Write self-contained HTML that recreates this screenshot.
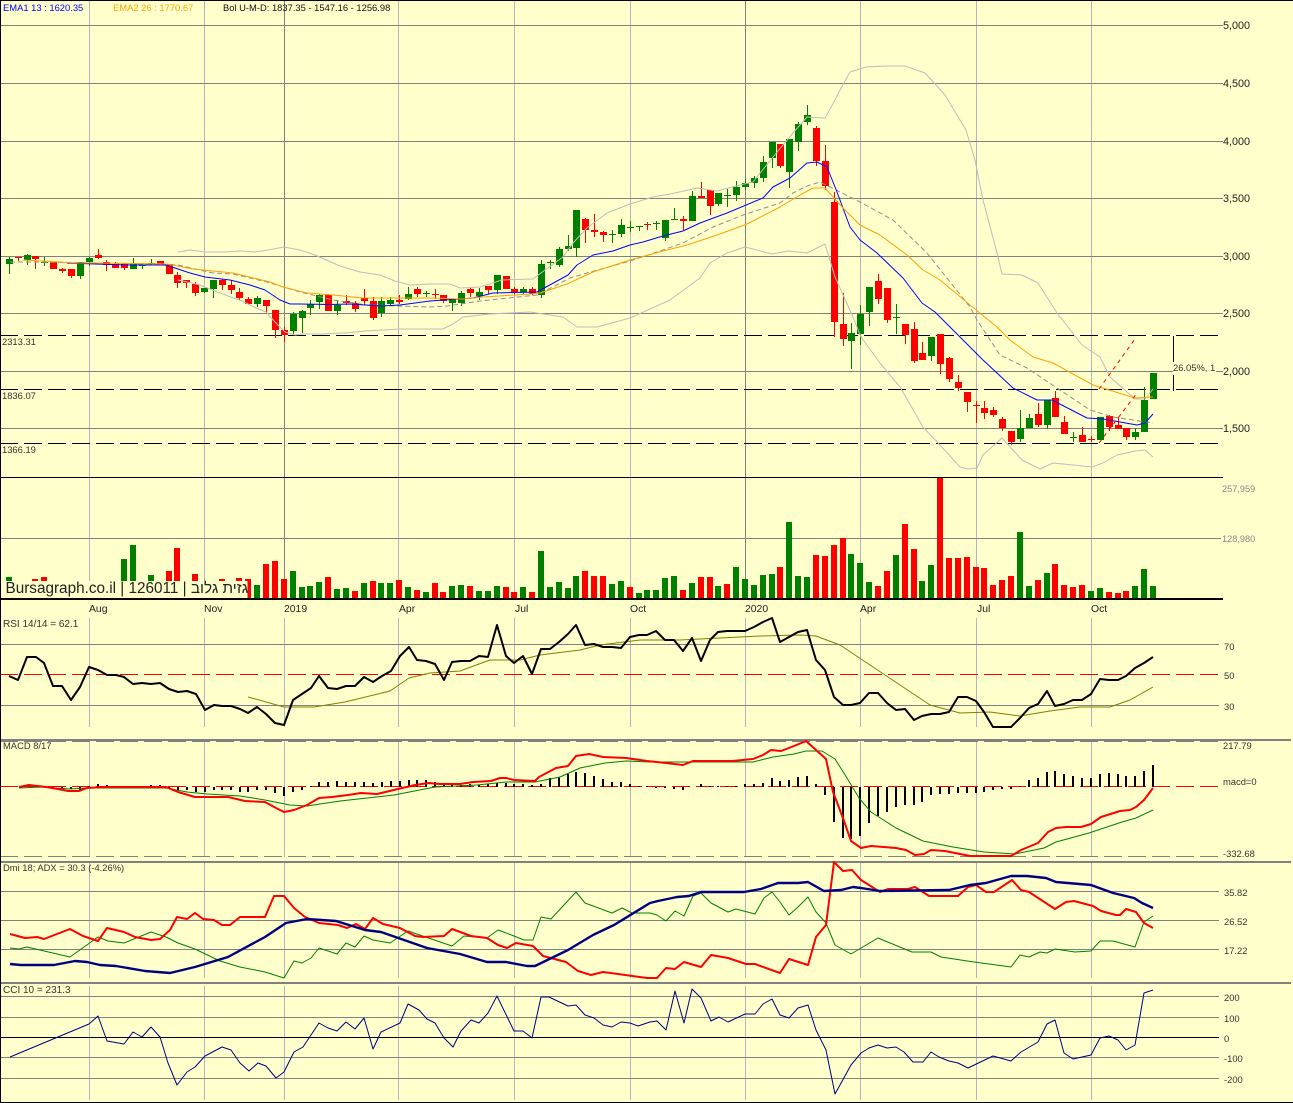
<!DOCTYPE html>
<html><head><meta charset="utf-8"><title>Bursagraph</title>
<style>
html,body{margin:0;padding:0;background:#ffffcc;width:1293px;height:1103px;overflow:hidden}
svg{position:absolute;left:0;top:0;display:block}
text{font-family:"Liberation Sans",sans-serif;font-size:9.4px;fill:#333}
.ax{font-size:10.8px;fill:#222}
.mo{font-size:10.4px;fill:#222}
.c{shape-rendering:crispEdges;fill:none}
.l{fill:none;stroke-linejoin:round}
#lab{position:absolute;left:5.5px;top:579px;height:19px;line-height:19px;font-family:"Liberation Sans",sans-serif;font-size:15.3px;color:#222;white-space:nowrap}
</style></head><body>
<svg width="1293" height="1103" viewBox="0 0 1293 1103">
<rect width="1293" height="1103" fill="#ffffcc"/>
<!-- vertical grid -->
<path class="c" stroke="#b4b4c4" d="M89.5 0V598M204.5 0V598M398.5 0V598M514.5 0V598M630.5 0V598M860.5 0V598M976.5 0V598M1091.5 0V598"/>
<path class="c" stroke="#808080" d="M284.5 0V598M745.5 0V598"/>
<path class="c" stroke="#b4b4c4" d="M89.5 618V727M204.5 618V727M284.5 618V727M398.5 618V727M514.5 618V727M630.5 618V727M745.5 618V727M860.5 618V727M976.5 618V727M1091.5 618V727M89.5 741V857M204.5 741V857M284.5 741V857M398.5 741V857M514.5 741V857M630.5 741V857M745.5 741V857M860.5 741V857M976.5 741V857M1091.5 741V857M89.5 863V978M204.5 863V978M284.5 863V978M398.5 863V978M514.5 863V978M630.5 863V978M745.5 863V978M860.5 863V978M976.5 863V978M1091.5 863V978M89.5 986V1100M204.5 986V1100M284.5 986V1100M398.5 986V1100M514.5 986V1100M630.5 986V1100M745.5 986V1100M860.5 986V1100M976.5 986V1100M1091.5 986V1100"/>
<!-- horizontal grid -->
<path class="c" stroke="#808080" d="M1 25.5H1223M1 83.5H1223M1 141.5H1223M1 198.5H1223M1 256.5H1223M1 313.5H1223M1 371.5H1223M1 428.5H1223M1 538.5H1221M1 644.5H1219M1 705.5H1219M1 891.5H1219M1 920.5H1219M1 949.5H1219M1 996.5H1219M1 1017.5H1219M1 1057.5H1219M1 1078.5H1219"/>
<path class="c" stroke="#000" d="M1 477.5H1223M1 1037.5H1219"/>
<path class="c" stroke="#000" stroke-width="2" d="M1 599H1223"/>
<!-- dashed levels -->
<path class="c" stroke="#000" stroke-dasharray="18 6" d="M0 335.5H1218M0 389.5H1218M0 443.5H1218"/>
<path class="c" stroke="#f00" stroke-dasharray="18 6" d="M0 674.5H1218M0 786.5H1218"/>
<path class="c" stroke="#808080" stroke-dasharray="18 6" d="M0 856.5H1218M0 741.5H1218"/>
<!-- separators -->
<path class="c" stroke="#808080" stroke-width="2" d="M0 740H1291M0 862H1291M0 983H1291"/>
<!-- volume -->
<path class="c" stroke="#f00" stroke-width="6" d="M35 598V579M44 598V577M169 598V571M177 598V548M195 598V574M222 598V579M239 598V578M248 598V579M266 598V564M275 598V561M284 598V579M328 598V577M355 598V591M373 598V581M399 598V580M417 598V590M435 598V583M443 598V592M470 598V586M506 598V587M514 598V592M532 598V592M585 598V571M594 598V576M603 598V576M630 598V587M683 598V590M701 598V577M710 598V577M727 598V584M780 598V567M816 598V555M825 598V556M834 598V545M843 598V538M878 598V586M887 598V571M905 598V524M914 598V549M940 598V478M949 598V558M958 598V558M967 598V557M976 598V567M984 598V568M993 598V585M1002 598V580M1011 598V576M1038 598V580M1055 598V564M1064 598V585M1073 598V587M1082 598V585M1109 598V592M1118 598V593M1126 598V591"/>
<path class="c" stroke="#008000" stroke-width="6" d="M9 598V577M124 598V559M133 598V545M151 598V575M257 598V585M293 598V571M302 598V587M310 598V586M319 598V582M337 598V589M346 598V588M364 598V583M381 598V583M390 598V583M408 598V587M426 598V592M452 598V586M461 598V585M479 598V591M488 598V591M497 598V586M523 598V587M541 598V551M550 598V587M559 598V582M568 598V588M576 598V576M612 598V584M621 598V581M639 598V593M647 598V590M656 598V590M665 598V578M674 598V576M692 598V583M718 598V586M736 598V567M745 598V579M754 598V585M763 598V575M772 598V574M789 598V522M798 598V576M807 598V577M851 598V554M860 598V563M869 598V582M896 598V555M922 598V581M931 598V565M1020 598V532M1029 598V586M1047 598V573M1091 598V591M1100 598V588M1135 598V586M1144 598V569M1153 598V586"/>
<rect x="1" y="581" width="246.5" height="17" fill="#ffffcc"/>
<!-- candle wicks -->
<path class="c" stroke="#008000" d="M9.5 257V274M27.5 254V265M44.5 257V266M80.5 262V279M89.5 257V266M133.5 258V269M142.5 263V269M151.5 259V265M204.5 288V293M213.5 280V298M257.5 296V307M293.5 312V334M302.5 310V333M310.5 300V315M319.5 294V309M337.5 300V315M381.5 297V317M390.5 297V305M408.5 287V300M426.5 291V297M452.5 299V311M461.5 291V306M479.5 288V300M497.5 275V294M523.5 287V294M541.5 260V298M550.5 260V269M559.5 247V267M568.5 235V251M576.5 210V257M612.5 230V243M621.5 219V237M630.5 221V232M639.5 226V231M656.5 221V230M665.5 220V241M674.5 208V220M692.5 191V221M718.5 193V206M727.5 189V207M736.5 181V201M745.5 179V190M754.5 176V188M763.5 156V182M772.5 142V168M789.5 139V188M798.5 122V151M807.5 105V125M851.5 323V369M860.5 305V345M869.5 287V326M896.5 304V334M931.5 337V361M1020.5 410V442M1029.5 414V428M1047.5 400V429M1073.5 432V442M1100.5 417V440M1135.5 428V440M1144.5 387V432M1153.5 373V399"/>
<path class="c" stroke="#f00" d="M18.5 257V261M35.5 256V269M53.5 262V269M62.5 268V273M71.5 269V278M98.5 249V259M106.5 260V271M115.5 262V268M124.5 263V270M160.5 261V264M169.5 264V274M177.5 272V288M186.5 280V288M195.5 282V296M222.5 279V290M231.5 280V294M239.5 288V300M248.5 297V304M266.5 300V314M275.5 310V338M284.5 327V342M328.5 294V311M346.5 295V305M355.5 301V312M364.5 289V305M373.5 297V320M399.5 295V304M417.5 287V297M435.5 289V299M443.5 295V303M470.5 288V297M488.5 286V294M506.5 276V289M514.5 287V295M532.5 287V295M585.5 218V243M594.5 214V237M603.5 231V242M647.5 222V230M683.5 216V230M701.5 182V198M710.5 190V215M780.5 144V168M816.5 126V166M825.5 145V190M834.5 192V337M843.5 293V346M878.5 274V304M887.5 288V323M905.5 324V344M914.5 322V363M922.5 342V360M940.5 334V374M949.5 357V382M958.5 375V391M967.5 392V412M976.5 401V423M984.5 401V419M993.5 407V417M1002.5 417V431M1011.5 431V445M1038.5 403V427M1055.5 391V417M1064.5 416V434M1082.5 427V442M1091.5 436V442M1109.5 415V431M1118.5 417V429M1126.5 428V440"/>
<!-- candle bodies -->
<path class="c" stroke="#008000" stroke-width="7" d="M9.5 259V264M27.5 255V260M44.5 262V263M80.5 262V276M89.5 258V262M133.5 264V269M142.5 265V266M151.5 263V264M204.5 288V292M213.5 280V289M257.5 298V304M293.5 314V331M302.5 311V318M310.5 304V308M319.5 295V302M337.5 305V311M381.5 301V313M390.5 300V304M408.5 294V299M426.5 293V294M452.5 299V303M461.5 293V303M479.5 292V296M497.5 275V290M523.5 289V292M541.5 264V295M550.5 262V263M559.5 249V265M568.5 246V249M576.5 210V248M612.5 234V235M621.5 225V234M630.5 227V228M639.5 226V227M656.5 223V224M665.5 220V238M674.5 219V220M692.5 196V221M718.5 193V204M727.5 195V196M736.5 187V195M745.5 183V187M754.5 178V183M763.5 162V178M772.5 142V158M789.5 139V172M798.5 124V142M807.5 115V122M851.5 333V341M860.5 314V334M869.5 287V312M896.5 317V318M931.5 337V356M1020.5 428V439M1029.5 418V428M1047.5 400V425M1073.5 437V438M1100.5 417V440M1135.5 432V437M1144.5 400V432M1153.5 373V399"/>
<path class="c" stroke="#f00" stroke-width="7" d="M18.5 257V258M35.5 256V259M53.5 262V269M62.5 269V271M71.5 269V276M98.5 255V258M106.5 262V265M115.5 264V268M124.5 264V268M160.5 261V264M169.5 264V274M177.5 275V283M186.5 280V283M195.5 284V293M222.5 280V285M231.5 285V290M239.5 292V298M248.5 299V304M266.5 300V306M275.5 310V330M284.5 330V335M328.5 295V311M346.5 301V303M355.5 303V309M364.5 298V301M373.5 301V318M399.5 300V302M417.5 289V294M435.5 294V295M443.5 295V301M470.5 289V293M488.5 286V290M506.5 276V289M514.5 289V292M532.5 289V294M585.5 219V230M594.5 230V232M603.5 232V235M647.5 224V225M683.5 219V221M701.5 196V198M710.5 190V206M780.5 144V166M816.5 128V161M825.5 161V186M834.5 202V322M843.5 324V339M878.5 281V299M887.5 288V320M905.5 324V335M914.5 329V361M922.5 353V360M940.5 334V364M949.5 358V379M958.5 382V388M967.5 392V402M976.5 405V406M984.5 408V413M993.5 410V415M1002.5 419V428M1011.5 431V442M1038.5 414V425M1055.5 398V417M1064.5 422V434M1082.5 435V442M1091.5 439V440M1109.5 416V427M1118.5 425V429M1126.5 428V437"/>
<!-- bands -->
<polyline class="l" stroke="#bdbdbd" points="178,252 190,250 205,252 225,252 240,251 255,252 268,250 284,247 300,250 315,255 340,266 360,272 380,275 395,281 410,285 430,284 450,284 460,288 480,287 502,280 533,279 545,270 563,257 573,243 587,228 607,213 630,204 653,197 675,193 697,188 717,191 740,185 753,182 773,157 793,133 807,117 825,118 835,100 840,90 850,72 866,67 885,66 905,66 925,73 945,95 966,130 975,160 983,200 997,253 1002,274 1022,275 1038,283 1057,313 1068,327 1082,345 1100,357 1110,377 1135,399 1145,399 1153,389"/>
<polyline class="l" stroke="#bdbdbd" points="178,280 200,285 215,291 228,296 242,301 256,308 266,312 275,322 285,332 295,335 303,334 320,334 345,333 365,331 400,329 430,329 443,329 453,324 463,317 490,314 530,312 563,317 577,327 597,327 630,318 670,300 700,278 710,263 727,253 745,247 772,254 788,251 807,253 825,244 835,277 853,317 861,337 880,363 900,387 923,427 940,445 960,467 968,469 977,468 983,455 1002,438 1022,460 1040,469 1053,463 1073,465 1092,467 1103,463 1117,455 1135,451 1145,450 1153,457"/>
<polyline class="l" stroke="#909090" stroke-dasharray="5 3" points="10,262 33,262 100,263 178,265 213,273 233,274 267,282 300,292 333,300 367,305 430,307 447,306 480,301 537,295 570,278 587,273 630,261 657,252 683,243 713,227 743,215 780,203 793,193 807,186 820,182 840,192 860,202 893,220 927,253 970,307 977,320 1000,355 1027,368 1057,388 1090,410 1113,417 1153,423"/>
<polyline class="l" stroke="#00f" points="67,263 95,264 130,265 165,265 175,268 190,273 205,277 230,280 250,285 265,290 280,300 290,304 300,304 330,304.5 350,304 380,306 400,305 430,301 473,298 493,293 537,292 568,275 577,265 593,255 613,251 630,245 643,242 663,236 683,231 700,223 727,213 763,198 773,187 790,178 807,163 817,162 827,167 837,192 850,227 860,240 877,253 903,278 922,303 935,312 963,340 983,360 997,373 1013,388 1037,400 1052,400 1087,418 1103,419 1120,422 1137,425 1145,423 1153,414"/>
<polyline class="l" stroke="#ffa000" points="23,260 43,261 60,262 77,263 100,263 167,264 193,269 233,273 270,282 283,287 307,293 333,295 363,298 430,298 463,299 483,297 530,294 540,293 567,284 593,272 630,260 663,251 687,245 720,234 747,224 780,207 800,195 813,188 825,188 843,208 860,225 880,235 907,255 923,270 940,280 970,305 997,327 1010,340 1033,357 1053,363 1093,385 1135,398 1153,397"/>
<path class="l" stroke="#f00" stroke-dasharray="4 4" d="M1099 389L1135 339M1099 443L1137 393"/>
<path class="c" stroke="#000" d="M1173.5 336V363M1173.5 375V391"/>
<rect x="1173" y="362" width="43" height="13" fill="#ffffcc"/>
<!-- RSI -->
<polyline class="l" stroke="#808000" points="248,697 284,707 314,707 345,702 390,691 409,678 430,673 460,671 490,660 520,660 540,655 580,650 600,645 640,640 680,640 720,638 760,636 800,635 816,636 840,645 870,665 900,685 930,705 960,713 990,712 1020,716 1050,711 1080,707 1110,707 1130,700 1153,687"/>
<polyline class="l" stroke="#000" stroke-width="2" points="9,676 18,680 27,657 36,657 44,663 53,686 62,686 71,700 80,687 89,667 98,670 107,675 116,675 124,677 133,684 142,683 151,684 160,683 169,689 178,692 187,691 196,694 205,710 214,705 222,706 231,706 240,709 248,713 257,707 266,714 275,723 284,725 293,700 302,694 311,688 319,676 328,688 337,689 346,686 355,686 364,677 373,682 382,676 391,671 400,656 409,647 417,660 426,661 435,664 444,680 452,662 461,661 470,661 479,656 488,657 497,625 506,656 514,663 523,656 532,674 541,649 550,649 559,642 568,634 576,625 585,645 594,644 603,647 612,647 621,648 630,637 639,635 647,635 656,631 665,640 674,640 683,651 692,638 701,661 710,640 718,632 727,631 736,631 745,631 754,627 763,622 772,618 780,642 789,637 798,632 807,630 816,660 825,670 834,697 843,705 851,705 860,703 869,693 878,693 887,703 896,710 905,709 914,720 922,716 931,714 940,714 949,712 958,697 967,697 976,701 984,712 993,727 1002,727 1011,727 1020,718 1029,708 1038,704 1047,691 1055,706 1064,704 1073,700 1082,700 1091,694 1100,679 1109,680 1118,680 1126,676 1135,668 1144,663 1153,657"/>
<!-- MACD -->
<path class="c" stroke="#000" stroke-width="2" d="M53 787V788M62 787V788M71 787V789M80 787V790M89 787V786M98 787V784M107 787V785M151 787V785M160 787V785M169 787V788M178 787V790M187 787V790M196 787V792M205 787V792M214 787V790M222 787V790M231 787V790M240 787V792M248 787V792M257 787V790M266 787V790M275 787V793M284 787V796M293 787V792M302 787V790M311 787V786M319 787V782M328 787V782M337 787V781M346 787V782M355 787V782M364 787V782M373 787V783M382 787V782M391 787V781M400 787V781M409 787V780M417 787V780M426 787V780M435 787V782M444 787V785M452 787V785M461 787V785M470 787V784M479 787V785M488 787V784M497 787V783M506 787V783M514 787V784M523 787V784M532 787V785M541 787V784M550 787V778M559 787V777M568 787V774M576 787V772M585 787V773M594 787V776M603 787V779M612 787V782M621 787V782M630 787V784M639 787V786M647 787V786M656 787V788M665 787V788M674 787V789M683 787V790M701 787V784M710 787V786M718 787V786M727 787V786M736 787V786M745 787V784M754 787V784M763 787V783M772 787V778M780 787V781M789 787V780M798 787V777M807 787V776M816 787V784M825 787V795M834 787V822M843 787V838M851 787V839M860 787V836M869 787V823M878 787V816M887 787V812M896 787V807M905 787V805M914 787V805M922 787V802M931 787V795M940 787V794M949 787V794M958 787V793M967 787V793M976 787V793M984 787V792M993 787V790M1002 787V789M1011 787V789M1020 787V786M1029 787V780M1038 787V778M1047 787V772M1055 787V771M1064 787V774M1073 787V776M1082 787V778M1091 787V778M1100 787V774M1109 787V773M1118 787V774M1126 787V776M1135 787V776M1144 787V771M1153 787V765"/>
<polyline class="l" stroke="#008000" points="19,788 41,787 70,789 87,788 166,788 187,792 207,794 240,796 265,800 290,805 307,806 340,801 394,795 435,787 477,785 506,782 535,782 560,777 580,768 605,763 626,761 650,762 691,762 753,762 773,757 794,754 806,751 822,751 835,759 847,778 859,798 871,812 896,828 923,841 953,847 984,852 1015,854 1044,848 1056,842 1089,833 1122,822 1136,818 1153,810"/>
<polyline class="l" stroke="#f00" stroke-width="2" points="19,787 29,785 46,787 58,789 68,791 79,791 87,788 104,787 166,787 178,792 195,797 214,797 228,797 245,801 265,802 276,808 284,812 294,810 307,805 319,798 332,797 348,795 361,793 377,794 398,789 415,785 429,783 439,784 460,784 473,782 491,781 500,778 506,778 514,780 535,781 539,777 556,768 568,766 576,756 589,754 603,757 626,758 647,761 666,763 683,765 693,761 732,761 753,759 763,755 771,750 781,751 794,746 806,741 816,750 826,759 833,792 843,818 851,841 861,848 871,846 896,848 906,850 915,855 924,854 931,850 945,851 970,856 1011,856 1021,850 1038,843 1048,832 1056,828 1066,827 1081,827 1091,824 1101,817 1120,811 1130,810 1136,807 1144,800 1153,788"/>
<!-- DMI -->
<polyline class="l" stroke="#008000" points="10,948 19,949 27,947 70,957 98,937 108,941 124,943 151,932 166,937 178,943 195,949 220,961 240,967 265,972 284,978 294,961 302,963 311,958 319,948 337,954 346,943 355,947 364,936 373,940 390,943 408,931 452,946 464,936 487,938 498,930 514,936 524,940 533,940 541,917 551,919 576,892 585,903 612,913 622,908 632,913 650,913 657,915 666,921 675,911 684,916 693,896 701,893 711,903 728,912 736,909 755,914 764,898 772,892 780,902 789,915 798,907 808,897 816,912 826,923 835,945 851,954 878,938 912,952 931,952 941,957 974,962 1011,967 1020,955 1029,957 1040,952 1047,953 1055,949 1075,952 1091,951 1100,941 1113,941 1135,947 1144,922 1153,916"/>
<polyline class="l" stroke="#f00" stroke-width="2" points="10,934 25,938 37,937 44,939 70,929 83,936 98,941 107,928 124,932 135,937 151,940 160,939 170,930 177,917 187,919 195,913 203,919 214,920 222,925 230,925 240,917 265,917 274,896 284,896 294,908 305,917 319,923 338,925 347,928 356,924 365,929 373,918 383,924 400,928 415,936 423,937 444,936 452,929 471,936 487,938 498,945 507,948 516,943 533,946 543,956 566,962 578,971 591,975 603,972 618,974 647,978 657,978 666,968 675,969 684,962 701,967 711,955 728,958 746,964 755,964 780,973 789,959 808,965 816,937 826,925 834,862 843,871 852,870 861,880 880,892 888,889 908,889 915,887 929,896 958,896 968,887 976,885 986,892 994,892 1012,880 1021,890 1029,892 1055,909 1066,902 1074,901 1093,906 1101,911 1116,915 1120,915 1126,909 1136,912 1144,923 1153,928"/>
<polyline class="l" stroke="#000080" stroke-width="2.4" points="10,964 21,965 54,965 75,961 87,962 100,965 116,966 145,971 170,973 195,967 228,957 265,937 286,923 307,919 336,921 365,930 381,932 427,948 460,954 487,962 506,962 527,966 535,966 568,950 593,935 614,925 650,903 658,901 677,897 689,896 701,892 744,892 761,889 778,883 798,883 808,882 824,891 841,890 853,887 861,888 880,891 949,890 970,885 986,883 1011,876 1027,876 1046,878 1056,882 1091,885 1113,893 1134,898 1142,903 1153,908"/>
<!-- CCI -->
<polyline class="l" stroke="#000080" points="10,1057 89,1024 98,1016 107,1041 124,1044 133,1032 142,1037 151,1027 160,1037 168,1063 177,1085 187,1072 195,1067 205,1056 222,1047 231,1050 240,1063 249,1071 258,1063 266,1066 276,1078 284,1072 294,1052 303,1047 319,1023 328,1028 337,1031 346,1022 355,1029 364,1018 373,1049 381,1032 400,1023 408,1004 419,1010 427,1019 435,1023 444,1038 453,1047 461,1031 471,1020 479,1023 488,1013 497,996 514,1031 523,1031 532,1038 541,997 549,997 568,1006 576,1005 585,1015 594,1018 603,1025 612,1027 621,1022 630,1023 638,1026 650,1022 657,1021 666,1030 675,991 684,1023 692,989 701,998 711,1021 719,1017 728,1022 745,1014 755,1014 763,1004 772,999 780,1015 789,1018 798,1008 808,1005 816,1030 826,1050 835,1094 851,1065 861,1053 869,1048 878,1045 887,1048 896,1047 904,1052 913,1062 923,1062 931,1052 939,1057 949,1061 958,1063 968,1068 993,1056 1011,1061 1021,1052 1038,1042 1047,1024 1055,1020 1064,1053 1073,1059 1082,1057 1091,1055 1100,1038 1109,1036 1118,1040 1126,1050 1135,1045 1144,993 1153,990"/>
<!-- frame -->
<path class="c" stroke="#000" d="M0.5 0V1103M0 0.5H1293M0 1102.5H1293"/>
<!-- texts -->
<text x="3" y="11" style="fill:#0000ff">EMA1 13 : 1620.35</text>
<text x="113" y="11" style="fill:#ffa500">EMA2 26 : 1770.67</text>
<text x="223" y="11" style="fill:#111">Bol U-M-D: 1837.35 - 1547.16 - 1256.98</text>
<text x="2" y="345">2313.31</text><text x="2" y="399">1836.07</text><text x="2" y="453">1366.19</text>
<text x="1173" y="371">26.05%, 1</text>
<text class="ax" x="1223" y="29">5,000</text><text class="ax" x="1223" y="87">4,500</text><text class="ax" x="1223" y="145">4,000</text><text class="ax" x="1223" y="202">3,500</text><text class="ax" x="1223" y="260">3,000</text><text class="ax" x="1223" y="317">2,500</text><text class="ax" x="1223" y="375">2,000</text><text class="ax" x="1223" y="432">1,500</text>
<text x="1222" y="492" style="fill:#888;font-size:9.2px">257,959</text><text x="1222" y="542" style="fill:#888;font-size:9.2px">128,980</text>
<text class="mo" x="89" y="612">Aug</text><text class="mo" x="204" y="612">Nov</text><text class="mo" x="284" y="612">2019</text><text class="mo" x="399" y="612">Apr</text><text class="mo" x="515" y="612">Jul</text><text class="mo" x="630" y="612">Oct</text><text class="mo" x="745" y="612">2020</text><text class="mo" x="860" y="612">Apr</text><text class="mo" x="977" y="612">Jul</text><text class="mo" x="1091" y="612">Oct</text>
<text x="3" y="627" style="font-size:10px">RSI 14/14 = 62.1</text>
<text x="1224" y="650">70</text><text x="1224" y="679">50</text><text x="1224" y="710">30</text>
<text x="3" y="749">MACD 8/17</text>
<text x="1223" y="749">217.79</text><text x="1223" y="785">macd=0</text><text x="1223" y="857">-332.68</text>
<text x="3" y="871">Dmi 18; ADX = 30.3 (-4.26%)</text>
<text x="1224" y="896">35.82</text><text x="1224" y="925">26.52</text><text x="1224" y="954">17.22</text>
<text x="3" y="993" style="font-size:10px">CCI 10 = 231.3</text>
<text x="1224" y="1001">200</text><text x="1224" y="1022">100</text><text x="1224" y="1042">0</text><text x="1224" y="1062">-100</text><text x="1224" y="1083">-200</text>
</svg>
<div id="lab">Bursagraph.co.il | 126011 | גזית גלוב</div>
</body></html>
